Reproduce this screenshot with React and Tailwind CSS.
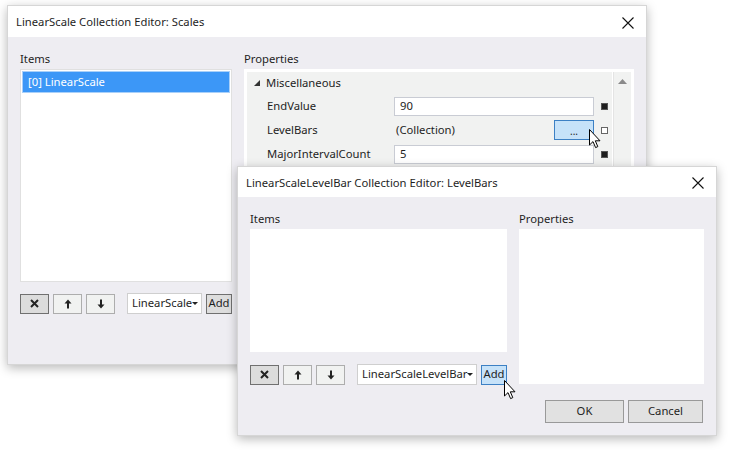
import React from "react";

const Cursor = ({ className }) => (
  <svg className={className} width="13" height="20" viewBox="0 0 13 20">
    <path d="M0.5 0.5 L0.5 16 L4 12.6 L6.6 18.6 L8.8 17.6 L6.3 11.8 L11 11.8 Z" fill="#fff" stroke="#000" strokeWidth="1" strokeLinejoin="miter" />
  </svg>
);

const CloseX = () => (
  <svg width="12" height="12" viewBox="0 0 12 12">
    <path d="M0.5 0.5 L11.5 11.5 M11.5 0.5 L0.5 11.5" stroke="#111" strokeWidth="1.1" />
  </svg>
);

const XIcon = () => (
  <svg width="9" height="9" viewBox="0 0 9 9">
    <path d="M1 1 L8 8 M8 1 L1 8" stroke="#222" strokeWidth="2" />
  </svg>
);
const UpIcon = () => (
  <svg width="8" height="10" viewBox="0 0 8 10">
    <path d="M4 0.5 L7.5 4.5 L5 4.5 L5 9.5 L3 9.5 L3 4.5 L0.5 4.5 Z" fill="#222" />
  </svg>
);
const DownIcon = () => (
  <svg width="8" height="10" viewBox="0 0 8 10">
    <path d="M4 9.5 L7.5 5.5 L5 5.5 L5 0.5 L3 0.5 L3 5.5 L0.5 5.5 Z" fill="#222" />
  </svg>
);

function ToolButtons() {
  return (
    <div className="flex gap-1">
      <div className="w-[29px] h-[20px] border border-[#707070] bg-[#dcdcdc] flex items-center justify-center"><XIcon /></div>
      <div className="w-[29px] h-[20px] border border-[#adadad] bg-[#f1f2f1] flex items-center justify-center"><UpIcon /></div>
      <div className="w-[29px] h-[20px] border border-[#adadad] bg-[#f1f2f1] flex items-center justify-center"><DownIcon /></div>
    </div>
  );
}

function Combo({ label, w }) {
  return (
    <div className={`${w} h-[21px] border border-[#cfcfcf] bg-white flex items-center justify-between pl-[4px] pr-[3px] text-[#1e1e1e] whitespace-nowrap overflow-hidden`}>
      <span>{label}</span>
      <svg width="6" height="3" viewBox="0 0 6 3" className="shrink-0"><path d="M0 0 L6 0 L3 3 Z" fill="#222" /></svg>
    </div>
  );
}

function PropRow({ name, children, marker }) {
  return (
    <div className="h-[24px] flex items-center">
      <div className="w-[147px] pl-[20px] text-[#1e1e1e]">{name}</div>
      <div className="w-[200px] flex items-center">{children}</div>
      <div className="w-[14px] flex justify-center ml-[3px]">
        {marker === "filled" ? (
          <div className="w-[7px] h-[7px] bg-[#1e1e1e] border border-[#555]" />
        ) : (
          <div className="w-[7px] h-[7px] bg-white border border-[#666]" />
        )}
      </div>
    </div>
  );
}

export default function App() {
  return (
    <div className="relative w-[729px] h-[450px] bg-white overflow-hidden font-['Noto_Sans',sans-serif] text-[11.25px] text-[#1e1e1e]">
      {/* Window 1 */}
      <div className="absolute left-[7px] top-[5px] w-[640px] h-[360px] bg-[#eeedf2] border border-[#d6d6d6] shadow-[0_3px_10px_rgba(0,0,0,0.28)] flex flex-col">
        <div className="h-[31px] bg-white flex items-center justify-between pl-[8px] pr-[12px] pt-[2px] shrink-0">
          <span>LinearScale Collection Editor: Scales</span>
          <CloseX />
        </div>
        <div className="flex gap-[12px] pl-[12px] pt-[12px]">
          <div className="w-[212px] flex flex-col">
            <div className="h-[20px] leading-[20px]">Items</div>
            <div className="h-[213px] bg-white border border-[#e0e0e0] p-[1px]">
              <div className="h-[22px] bg-[#3c97f7] border border-[#a9d0f9] text-white flex items-center pl-[5px]">[0] LinearScale</div>
            </div>
            <div className="flex items-center mt-[11px]">
              <ToolButtons />
              <div className="ml-[12px]"><Combo label="LinearScale" w="w-[75px]" /></div>
              <div className="ml-[4px] w-[26px] h-[20px] border border-[#707070] bg-[#dddddd] flex items-center justify-center">Add</div>
            </div>
          </div>
          <div className="w-[390px] flex flex-col">
            <div className="h-[20px] leading-[20px]">Properties</div>
            <div className="h-[250px] bg-white p-[3px] flex">
              <div className="flex-1 bg-[#f1f2f1] flex flex-col">
                <div className="h-[22px] flex items-center pl-[7px] gap-[6px]">
                  <svg width="6" height="6" viewBox="0 0 6 6"><path d="M6 0 L6 6 L0 6 Z" fill="#333" /></svg>
                  <span>Miscellaneous</span>
                </div>
                <PropRow name="EndValue" marker="filled">
                  <div className="w-[201px] h-[19px] bg-white border border-[#c9ccd4] flex items-center pl-[5px]">90</div>
                </PropRow>
                <PropRow name="LevelBars" marker="empty">
                  <div className="w-[201px] h-[20px] flex items-center justify-between pl-[2px]">
                    <span>(Collection)</span>
                    <div className="w-[40px] h-[20px] bg-[#c6e2f9] border border-[#3c80c4] flex items-end justify-center pb-[3px] text-[10px] leading-[10px]">...</div>
                  </div>
                </PropRow>
                <PropRow name="MajorIntervalCount" marker="filled">
                  <div className="w-[201px] h-[19px] bg-white border border-[#c9ccd4] flex items-center pl-[5px]">5</div>
                </PropRow>
              </div>
              <div className="w-[18px] ml-[1px] bg-[#f1f2f1] border-l border-[#e4e4e4] flex justify-center pt-[7px]">
                <svg width="9" height="5" viewBox="0 0 9 5"><path d="M0 5 L4.5 0 L9 5 Z" fill="#8a8a8a" /></svg>
              </div>
            </div>
          </div>
        </div>
      </div>
      <Cursor className="absolute left-[589px] top-[129px]" />

      {/* Window 2 */}
      <div className="absolute left-[237px] top-[166px] w-[480px] h-[270px] bg-[#eeedf2] border border-[#d6d6d6] shadow-[0_3px_10px_rgba(0,0,0,0.28)] flex flex-col">
        <div className="h-[30px] bg-white flex items-center justify-between pl-[8px] pr-[12px] pt-[2px] shrink-0">
          <span>LinearScaleLevelBar Collection Editor: LevelBars</span>
          <CloseX />
        </div>
        <div className="flex gap-[12px] pl-[12px] pt-[12px]">
          <div className="w-[257px] flex flex-col">
            <div className="h-[20px] leading-[20px]">Items</div>
            <div className="h-[123px] bg-white" />
            <div className="flex items-center mt-[12px]">
              <ToolButtons />
              <div className="ml-[12px]"><Combo label="LinearScaleLevelBar" w="w-[120px]" /></div>
              <div className="ml-[4px] w-[26px] h-[20px] border border-[#3c80c4] bg-[#c6e2f9] flex items-center justify-center">Add</div>
            </div>
          </div>
          <div className="w-[185px] flex flex-col">
            <div className="h-[20px] leading-[20px]">Properties</div>
            <div className="h-[155px] bg-white" />
          </div>
        </div>
        <div className="flex justify-end gap-[4px] pr-[13px] mt-[15px]">
          <div className="w-[79px] h-[23px] bg-[#e1e1e1] border border-[#999] flex items-center justify-center">OK</div>
          <div className="w-[75px] h-[23px] bg-[#e1e1e1] border border-[#999] flex items-center justify-center">Cancel</div>
        </div>
      </div>
      <Cursor className="absolute left-[504px] top-[380px]" />
    </div>
  );
}
